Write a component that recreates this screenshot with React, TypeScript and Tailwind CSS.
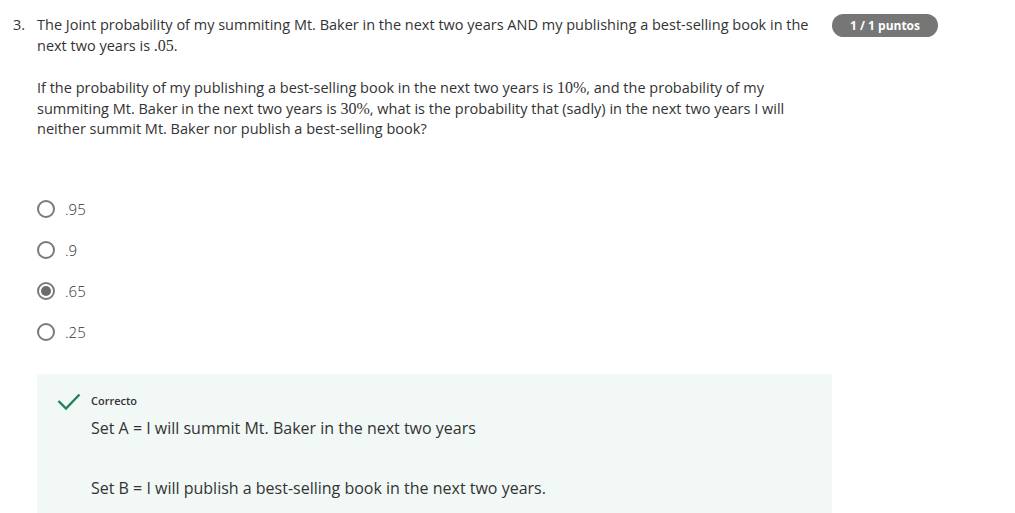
import React from "react";

const math = { fontFamily: '"Liberation Serif", "DejaVu Serif", serif', fontSize: "16px", lineHeight: "1" };

function Radio({ checked }: { checked?: boolean }) {
  return (
    <span className="w-[18px] h-[18px] rounded-full border-2 border-[#7a7a7a] flex items-center justify-center shrink-0">
      {checked && <span className="w-[10px] h-[10px] rounded-full bg-[#6b6b6b]" />}
    </span>
  );
}

export default function App() {
  const options = [".95", ".9", ".65", ".25"];
  return (
    <div
      className="min-h-[513px] bg-white text-[#1f1f1f] overflow-hidden"
      style={{ fontFamily: '"Open Sans", "Noto Sans", sans-serif' }}
    >
      <div className="flex items-start pt-[15px] pl-[13px]">
        <div className="w-[24px] text-[14.5px] leading-[20.5px] text-[#333]">3.</div>
        <div className="w-[780px]">
          <div className="text-[14.5px] leading-[20.5px] text-[#333]">
            <p>
              The Joint probability of my summiting Mt. Baker in the next two years AND my publishing a best-selling book in the next two years is <span style={math}>.05</span>.
            </p>
            <p className="mt-[22px]">
              If the probability of my publishing a best-selling book in the next two years is <span style={math}>10%</span>, and the probability of my summiting Mt. Baker in the next two years is <span style={math}>30%</span>, what is the probability that (sadly) in the next two years I will neither summit Mt. Baker nor publish a best-selling book?
            </p>
          </div>
          <div className="mt-[49px] flex flex-col">
            {options.map((o, i) => (
              <div key={o} className="h-[41px] flex items-center gap-[10px]">
                <Radio checked={i === 2} />
                <span className="text-[15px] font-light text-[#333]">{o}</span>
              </div>
            ))}
          </div>
          <div className="mt-[21px] w-[795px] bg-[#f2f8f6] pt-[19px] pb-[30px] pl-[20px] flex">
            <svg width="24" height="18" viewBox="0 0 24 18" className="shrink-0">
              <path d="M1.5 8 L9 15.5 L22.5 1.5" fill="none" stroke="#1f8354" strokeWidth="2.4" />
            </svg>
            <div className="ml-[10px]">
              <div className="text-[11px] leading-[16px] font-semibold text-[#333]">Correcto</div>
              <p className="mt-[7px] text-[16px] leading-[24px] text-[#333]">
                Set A = I will summit Mt. Baker in the next two years
              </p>
              <p className="mt-[36px] text-[16px] leading-[24px] text-[#333]">
                Set B = I will publish a best-selling book in the next two years.
              </p>
            </div>
          </div>
        </div>
        <div className="-mt-[1px] ml-[15px] flex">
          <span className="flex items-center h-[23px] px-[18px] rounded-full bg-[#767676] text-white text-[12px] font-bold">
            1 / 1 puntos
          </span>
        </div>
      </div>
    </div>
  );
}
